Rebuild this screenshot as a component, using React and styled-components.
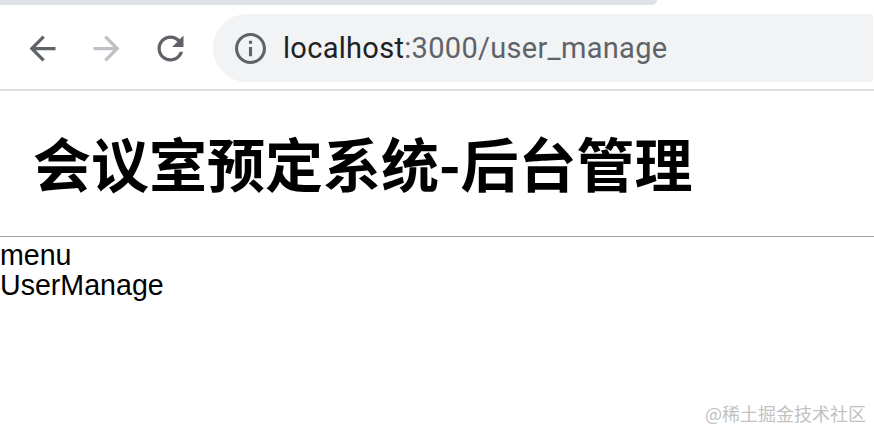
import React from "react";
import styled, { createGlobalStyle } from "styled-components";

const Global = createGlobalStyle`
  html, body { margin: 0; padding: 0; background: #fff; }
  body { width: 874px; height: 432px; overflow: hidden; position: relative; font-family: "Liberation Sans", Arial, sans-serif; }
`;

const Chrome = styled.div`
  display: flex;
  flex-direction: column;
  background: #fff;
  border-bottom: 2px solid #dadce0;
`;

const TabStrip = styled.div`
  display: flex;
  height: 5px;
`;

const TabEdge = styled.div`
  width: 657px;
  height: 5px;
  background: #dee1e6;
  border-bottom-right-radius: 8px;
`;

const Toolbar = styled.div`
  display: flex;
  align-items: center;
  height: 84px;
  padding: 0 1px 0 10px;
  box-sizing: border-box;
`;

const NavButton = styled.div`
  width: 64px;
  height: 68px;
  display: flex;
  align-items: center;
  justify-content: center;
  color: ${(p) => (p.$disabled ? "#bdc1c6" : "#5f6368")};
  margin-top: 2px;
`;

const Omnibox = styled.div`
  flex: 1;
  height: 68px;
  margin: 2px 0 0 11px;
  background: #f1f3f4;
  border-radius: 34px 0 0 34px;
  display: flex;
  align-items: center;
  padding-left: 22px;
  gap: 17px;
`;

const InfoIcon = styled.svg`
  width: 31px;
  height: 31px;
  color: #5f6368;
  flex: none;
`;

const Url = styled.div`
  font-family: Roboto, "Liberation Sans", sans-serif;
  font-size: 29px;
  white-space: nowrap;
  letter-spacing: 0.3px;
`;

const Host = styled.span`
  color: #202124;
`;

const Path = styled.span`
  color: #5f6368;
`;

const Header = styled.header`
  height: 145px;
  display: flex;
  align-items: center;
  padding-left: 33px;
`;

const Title = styled.h1`
  margin: 0 0 3px;
  font-family: "Noto Sans CJK SC", "Noto Sans", sans-serif;
  font-weight: 700;
  font-size: 58px;
  line-height: 1;
  color: #000;
  letter-spacing: 0;
`;

const Divider = styled.div`
  height: 1px;
  background: #a3a3a3;
`;

const Content = styled.main`
  padding-top: 3px;
  display: flex;
  flex-direction: column;
`;

const Line = styled.div`
  font-size: 28.6px;
  line-height: 30px;
  color: #000;
`;

const Watermark = styled.div`
  position: absolute;
  right: 8px;
  bottom: 8px;
  font-family: "Noto Sans CJK SC", "Liberation Sans", sans-serif;
  font-size: 18px;
  line-height: 22px;
  color: #c2c2c2;
  white-space: nowrap;
`;

const Icon = ({ d }) => (
  <svg width="39" height="39" viewBox="0 0 24 24" fill="currentColor">
    <path d={d} />
  </svg>
);

export default function App() {
  return (
    <>
      <Global />
      <Chrome>
        <TabStrip>
          <TabEdge />
        </TabStrip>
        <Toolbar>
          <NavButton>
            <Icon d="M20 11H7.83l5.59-5.59L12 4l-8 8 8 8 1.41-1.41L7.83 13H20v-2z" />
          </NavButton>
          <NavButton $disabled>
            <Icon d="M4 11h12.17l-5.59-5.59L12 4l8 8-8 8-1.41-1.41L16.17 13H4v-2z" />
          </NavButton>
          <NavButton>
            <Icon d="M17.65 6.35C16.2 4.9 14.21 4 12 4c-4.42 0-7.99 3.58-7.99 8s3.57 8 7.99 8c3.73 0 6.84-2.55 7.73-6h-2.08c-.82 2.33-3.04 4-5.65 4-3.31 0-6-2.69-6-6s2.69-6 6-6c1.66 0 3.14.69 4.22 1.78L13 11h7V4l-2.35 2.35z" />
          </NavButton>
          <Omnibox>
            <InfoIcon viewBox="2 2 20 20" fill="currentColor">
              <path d="M11 7h2v2h-2zm0 4h2v6h-2zm1-9C6.48 2 2 6.48 2 12s4.48 10 10 10 10-4.48 10-10S17.52 2 12 2zm0 18c-4.41 0-8-3.59-8-8s3.59-8 8-8 8 3.59 8 8-3.59 8-8 8z" />
            </InfoIcon>
            <Url>
              <Host>localhost</Host>
              <Path>:3000/user_manage</Path>
            </Url>
          </Omnibox>
        </Toolbar>
      </Chrome>
      <Header>
        <Title>会议室预定系统-后台管理</Title>
      </Header>
      <Divider />
      <Content>
        <Line>menu</Line>
        <Line>UserManage</Line>
      </Content>
      <Watermark>@稀土掘金技术社区</Watermark>
    </>
  );
}
